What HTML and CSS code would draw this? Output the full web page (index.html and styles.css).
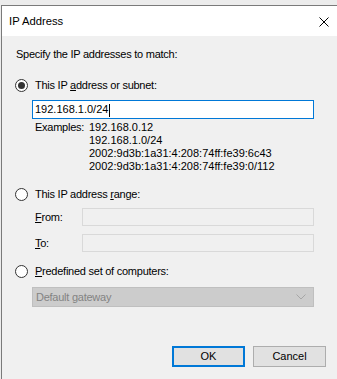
FILE: index.html
```html
<html>
<head>
<meta name="viewport" content="width=device-width, initial-scale=1.0" />
<link rel="stylesheet" href="styles.css">
</head>
<body>
<div class="window">
  <div class="titlebar">
    <span class="title">IP Address</span>
    <svg class="close" width="10" height="10" viewBox="0 0 10 10">
      <path d="M0.5 0.5 L9.5 9.5 M9.5 0.5 L0.5 9.5" stroke="#000" stroke-width="1" fill="none"/>
    </svg>
  </div>
  <div class="content">
    <div class="intro">Specify the IP addresses to match:</div>

    <div class="option first">
      <span class="radio checked"></span>
      <span>This IP <u>a</u>ddress or subnet:</span>
    </div>
    <div class="textbox active">192.168.1.0/24<span class="caret"></span></div>
    <div class="examples">
      <div class="ex_label">Examples:</div>
      <div class="ex_list">
        <div>192.168.0.12</div>
        <div>192.168.1.0/24</div>
        <div>2002:9d3b:1a31:4:208:74ff:fe39:6c43</div>
        <div>2002:9d3b:1a31:4:208:74ff:fe39:0/112</div>
      </div>
    </div>

    <div class="option second">
      <span class="radio"></span>
      <span>This IP address <u>r</u>ange:</span>
    </div>
    <div class="field from">
      <span class="field_label"><u>F</u>rom:</span>
      <div class="textbox disabled"></div>
    </div>
    <div class="field to">
      <span class="field_label"><u>T</u>o:</span>
      <div class="textbox disabled"></div>
    </div>

    <div class="option third">
      <span class="radio"></span>
      <span><u>P</u>redefined set of computers:</span>
    </div>
    <div class="select">
      <span>Default gateway</span>
      <svg width="10" height="6" viewBox="0 0 10 6">
        <path d="M0.5 0.5 L5 5 L9.5 0.5" stroke="#a6a6a6" stroke-width="1" fill="none"/>
      </svg>
    </div>

    <div class="buttons">
      <div class="button default">OK</div>
      <div class="button">Cancel</div>
    </div>
  </div>
</div>
</body>
</html>
```
FILE: styles.css
```css
body {
  margin: 0;
  background: #ececec;
  font-family: "Liberation Sans", Arial, sans-serif;
  font-size: 11px;
  letter-spacing: -0.25px;
  color: #000;
  overflow: hidden;
}

.window {
  margin-top: 5px;
  margin-left: 1px;
  width: 336px;
  height: 374px;
  box-sizing: border-box;
  border-top: 1px solid #7a7a7a;
  border-left: 1px solid #7a7a7a;
  background: #f0f0f0;
}

.titlebar {
  height: 30px;
  background: #fff;
  display: flex;
  align-items: center;
  padding-left: 7px;
  font-size: 11.25px;
  letter-spacing: 0;
}

.title {
  flex: 1;
  padding-bottom: 1px;
}

.close {
  margin-right: 8px;
  margin-top: 1px;
}

.content {
  padding-left: 13px;
  width: 311px;
}

.intro {
  padding-top: 11px;
  margin-left: 1px;
  line-height: 14px;
}

.option {
  display: flex;
  align-items: center;
  height: 14px;
  gap: 7px;
}

.option.first { margin-top: 17px; }
.option.second { margin-top: 14px; }
.option.third { margin-top: 12px; }

.radio {
  width: 11px;
  height: 11px;
  border: 1px solid #333;
  border-radius: 50%;
  background: #fff;
  display: flex;
  align-items: center;
  justify-content: center;
  flex: none;
}

.radio.checked::after {
  content: "";
  width: 7px;
  height: 7px;
  border-radius: 50%;
  background: #333;
}

.textbox {
  height: 17px;
  line-height: 17px;
  box-sizing: content-box;
  border: 1px solid #7a7a7a;
  background: #fff;
  padding-left: 2px;
}

.textbox.active {
  margin-top: 8px;
  margin-left: 17px;
  margin-right: 12px;
  border-color: #0078d7;
  letter-spacing: 0;
}

.caret {
  display: inline-block;
  width: 1px;
  height: 13px;
  background: #000;
  vertical-align: middle;
  margin-left: 1px;
}

.examples {
  display: flex;
  margin-top: 2px;
  margin-left: 20px;
  line-height: 13px;
}

.ex_label {
  width: 54px;
  flex: none;
}

.ex_list {
  letter-spacing: 0;
}

.field {
  display: flex;
  align-items: center;
  margin-left: 20px;
  margin-right: 12px;
}

.field.from { margin-top: 7px; }
.field.to { margin-top: 8px; }

.field_label {
  width: 47px;
  flex: none;
}

.textbox.disabled {
  flex: 1;
  height: 16px;
  border-color: #d9d9d9;
  background: #f0f0f0;
}

.select {
  margin-top: 9px;
  margin-left: 17px;
  margin-right: 12px;
  height: 18px;
  border: 1px solid #bfbfbf;
  background: #cccccc;
  color: #838383;
  display: flex;
  align-items: center;
  justify-content: space-between;
  padding: 0 7px 0 3px;
}

.buttons {
  margin-top: 39px;
  display: flex;
  justify-content: flex-end;
  gap: 8px;
  letter-spacing: 0;
}

.button {
  width: 71px;
  height: 19px;
  line-height: 19px;
  text-align: center;
  background: #e1e1e1;
  border: 1px solid #adadad;
}

.button.default {
  width: 69px;
  height: 17px;
  line-height: 17px;
  border: 2px solid #0078d7;
}
```
